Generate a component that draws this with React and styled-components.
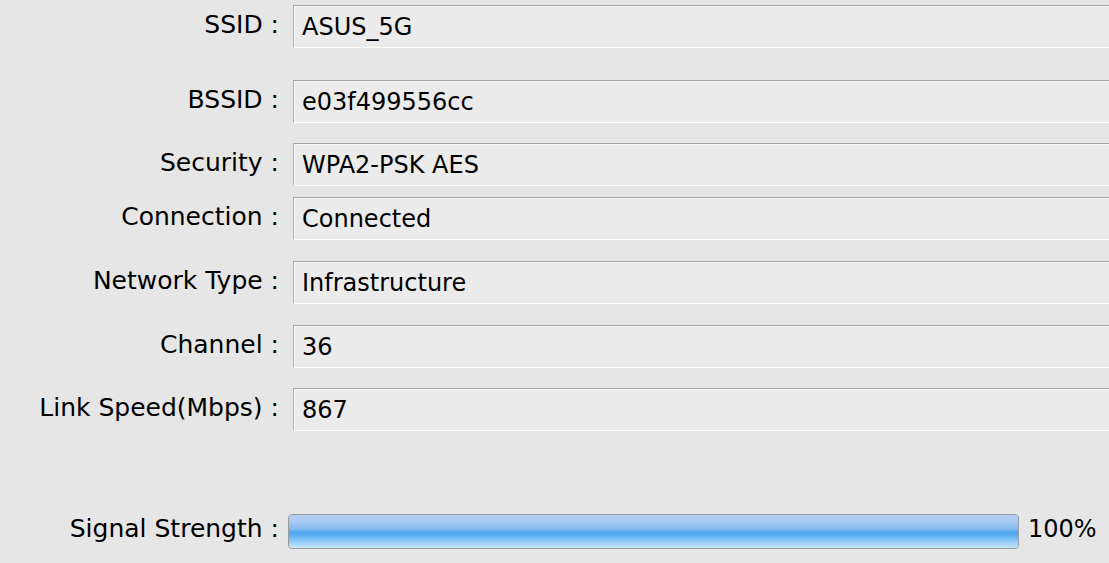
import styled, { createGlobalStyle } from "styled-components"

const GlobalStyle = createGlobalStyle`
    html, body {
        margin:0;
        padding:0;
        background:#e6e6e6;
        overflow:hidden;
    }
`
const Panel = styled.div`
    width:1109px;
    height:563px;
    overflow:hidden;
    background:#e6e6e6;
    font-family:"DejaVu Sans", "Liberation Sans", sans-serif;
    font-size:24px;
    color:#000;
    padding-top:5px;
    box-sizing:border-box;
`
const Row = styled.div`
    display:flex;
    align-items:flex-start;
    margin-top:${props => props.$top}px;
    &:first-child{
        margin-top:0;
    }
`
const Label = styled.div`
    width:279px;
    flex:none;
    text-align:right;
    white-space:nowrap;
    font-size:25px;
    padding-top:${props => props.$pad ?? 5}px;
`
const Field = styled.div`
    flex:1;
    min-width:0;
    height:43px;
    box-sizing:border-box;
    margin-left:14px;
    margin-right:-30px;
    padding:7px 0 0 8px;
    background:#ebebeb;
    border:1px solid;
    border-color:#a3a3a3 #c4c4c4 #fbfbfb #b3b3b3;
    box-shadow:inset 1px 1px 0 #f7f7f7;
    white-space:nowrap;
`
const Bar = styled.div`
    width:731px;
    height:35px;
    box-sizing:border-box;
    margin-left:9px;
    border:1px solid #9c9c9c;
    border-radius:4px;
    background:#dcdcdc;
    overflow:hidden;
`
const Fill = styled.div`
    height:100%;
    border-radius:3px;
    background:linear-gradient(to bottom,
        #b6d0f3 0%,
        #a5c8f2 22%,
        #86baf0 42%,
        #4ea6ef 52%,
        #62b2f1 64%,
        #94ccf6 82%,
        #c6e7fb 100%);
`
const Percent = styled.div`
    margin-left:9px;
    padding-top:1px;
`

const info = [
    { label: "SSID :", value: "ASUS_5G", top: 0 },
    { label: "BSSID :", value: "e03f499556cc", top: 32 },
    { label: "Security :", value: "WPA2-PSK AES", top: 20 },
    { label: "Connection :", value: "Connected", top: 11 },
    { label: "Network Type :", value: "Infrastructure", top: 21 },
    { label: "Channel :", value: "36", top: 21 },
    { label: "Link Speed(Mbps) :", value: "867", top: 20 },
]

export default function App()
{
    const signal = 100
    return(
        <Panel>
            <GlobalStyle/>
            {info.map(item => (
                <Row key={item.label} $top={item.top}>
                    <Label>{item.label}</Label>
                    <Field>{item.value}</Field>
                </Row>
            ))}
            <Row $top={83}>
                <Label $pad={0}>Signal Strength :</Label>
                <Bar>
                    <Fill style={{ width: signal + "%" }}/>
                </Bar>
                <Percent>{signal}%</Percent>
            </Row>
        </Panel>
    )
}
